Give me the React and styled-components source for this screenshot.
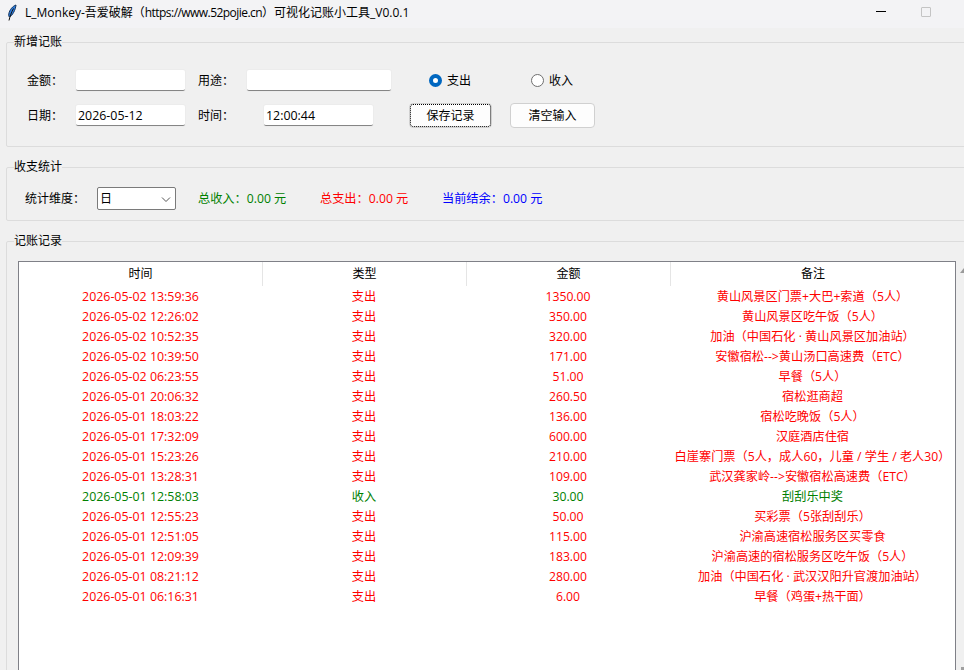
import styled, { createGlobalStyle } from 'styled-components'

const FONT = `"Open Sans", "Noto Sans CJK SC", sans-serif`

const RECORDS = [
  { time: '2026-05-02 13:59:36', type: '支出', amount: '1350.00', note: '黄山风景区门票+大巴+索道（5人）' },
  { time: '2026-05-02 12:26:02', type: '支出', amount: '350.00', note: '黄山风景区吃午饭（5人）' },
  { time: '2026-05-02 10:52:35', type: '支出', amount: '320.00', note: '加油（中国石化 · 黄山风景区加油站）' },
  { time: '2026-05-02 10:39:50', type: '支出', amount: '171.00', note: '安徽宿松-->黄山汤口高速费（ETC）' },
  { time: '2026-05-02 06:23:55', type: '支出', amount: '51.00', note: '早餐（5人）' },
  { time: '2026-05-01 20:06:32', type: '支出', amount: '260.50', note: '宿松逛商超' },
  { time: '2026-05-01 18:03:22', type: '支出', amount: '136.00', note: '宿松吃晚饭（5人）' },
  { time: '2026-05-01 17:32:09', type: '支出', amount: '600.00', note: '汉庭酒店住宿' },
  { time: '2026-05-01 15:23:26', type: '支出', amount: '210.00', note: '白崖寨门票（5人，成人60，儿童 / 学生 / 老人30）' },
  { time: '2026-05-01 13:28:31', type: '支出', amount: '109.00', note: '武汉龚家岭-->安徽宿松高速费（ETC）' },
  { time: '2026-05-01 12:58:03', type: '收入', amount: '30.00', note: '刮刮乐中奖' },
  { time: '2026-05-01 12:55:23', type: '支出', amount: '50.00', note: '买彩票（5张刮刮乐）' },
  { time: '2026-05-01 12:51:05', type: '支出', amount: '115.00', note: '沪渝高速宿松服务区买零食' },
  { time: '2026-05-01 12:09:39', type: '支出', amount: '183.00', note: '沪渝高速的宿松服务区吃午饭（5人）' },
  { time: '2026-05-01 08:21:12', type: '支出', amount: '280.00', note: '加油（中国石化 · 武汉汉阳升官渡加油站）' },
  { time: '2026-05-01 06:16:31', type: '支出', amount: '6.00', note: '早餐（鸡蛋+热干面）' },
]

const GlobalStyle = createGlobalStyle`
  html, body {
    margin: 0;
    height: 100%;
    overflow: hidden;
    background: #f0f0f0;
  }
`

const Window = styled.div`
  width: 964px;
  height: 670px;
  overflow: hidden;
  display: flex;
  flex-direction: column;
  background: #f0f0f0;
  color: #000;
  font: 12.2px/16px ${FONT};
`

const TitleBar = styled.header`
  height: 28px;
  flex: none;
  display: flex;
  align-items: center;
  padding: 0 33px 3px 6px;
  box-sizing: border-box;
  background: #f3f3f5;
`

const Title = styled.span`
  margin-left: 8px;
  flex: 1;
  font-size: 12px;
  white-space: nowrap;
`

const TitleUrl = styled.span`
  letter-spacing: -0.55px;
`

const MinimizeIcon = styled.i`
  width: 10px;
  height: 1px;
  margin: 0 35px 2px 0;
  background: #000;
`

const MaximizeIcon = styled.i`
  width: 8px;
  height: 8px;
  margin-bottom: 2px;
  border: 1px solid #c4c4c4;
  border-radius: 1px;
`

const Group = styled.fieldset`
  margin: ${(props) => props.$top}px -6px 0 6px;
  padding: 0;
  min-width: 0;
  height: ${(props) => props.$height}px;
  box-sizing: border-box;
  flex: none;
  border: 1px solid #dcdcdc;
  border-radius: 2px;
`

const Legend = styled.legend`
  margin-left: 7px;
  padding: 0;
  line-height: 14px;
  font-size: 12px;
`

const FormRows = styled.div`
  display: flex;
  flex-direction: column;
  gap: 12px;
  padding: 20px 0 0 20px;
`

const FormRow = styled.div`
  display: flex;
  align-items: center;
  height: 23px;
`

const Label = styled.label`
  width: ${(props) => props.$width}px;
  margin-left: ${(props) => props.$left || 0}px;
  flex: none;
  font-size: 12px;
`

const Entry = styled.div`
  width: ${(props) => props.$width}px;
  height: 21px;
  flex: none;
  box-sizing: border-box;
  padding-left: 2px;
  font-size: 12.4px;
  line-height: 21px;
  background: #fff;
  border-bottom: 1px solid #858585;
  border-radius: 2px;
  box-shadow: 0 0 0 1px #ececec;
`

const RadioGroup = styled.div`
  display: flex;
  width: ${(props) => props.$width}px;
  margin-left: ${(props) => props.$left || 0}px;
  align-items: center;
  gap: 5px;
  font-size: 12px;
`

const RadioDot = styled.span`
  width: 13px;
  height: 13px;
  flex: none;
  box-sizing: border-box;
  border-radius: 50%;
  background: #fff;
  border: ${(props) => (props.$checked ? '4px solid #0067c0' : '1px solid #6f6f6f')};
`

const Button = styled.button`
  width: ${(props) => props.$width}px;
  height: 25px;
  margin-left: ${(props) => props.$left}px;
  padding: 0;
  flex: none;
  font: inherit;
  font-size: 12px;
  color: #000;
  background: #fdfdfd;
  border: 1px solid #d0d0d0;
  border-radius: 4px;
  outline: ${(props) => (props.$focused ? '1px dotted #000' : 'none')};
  outline-offset: -2px;
`

const StatsRow = styled.div`
  display: flex;
  align-items: center;
  height: 23px;
  padding: 13px 0 0 18px;
`

const Combo = styled.div`
  width: 79px;
  height: 23px;
  flex: none;
  box-sizing: border-box;
  display: flex;
  align-items: center;
  justify-content: space-between;
  padding: 0 3px 0 2px;
  margin-right: 22px;
  font-size: 12px;
  background: #fff;
  border: 1px solid #7a7a7a;
  border-radius: 2px;
`

const Stat = styled.span`
  width: ${(props) => props.$width}px;
  flex: none;
  color: ${(props) => props.$color};
`

const RecordsBody = styled.div`
  display: flex;
  margin-top: 13px;
  margin-left: 11px;
  height: 409px;
`

const Table = styled.div`
  width: 938px;
  flex: none;
  box-sizing: border-box;
  background: #fff;
  border: 1px solid #7f8087;
  border-bottom: 0;
`

const Cols = styled.div`
  display: grid;
  grid-template-columns: 243px 204px 204px 1fr;
  text-align: center;
  color: ${(props) => props.$color || '#000'};
  height: ${(props) => props.$height}px;
  line-height: ${(props) => props.$height}px;
  white-space: nowrap;
`

const HeaderCell = styled.div`
  height: 24px;
  line-height: 23px;
  font-size: 12px;
  border-left: ${(props) => (props.$first ? '0' : '1px solid #e5e5e5')};
`

const TimeCell = styled.div`
  font-size: 12.4px;
`

const Scrollbar = styled.div`
  width: 8px;
  flex: none;
  display: flex;
  flex-direction: column;
  justify-content: space-between;
  align-items: flex-end;
  padding-top: 7px;
  box-sizing: border-box;
`

const ArrowUp = styled.i`
  width: 0;
  height: 0;
  border-left: 4px solid transparent;
  border-bottom: 5px solid #9a9a9a;
`

const ArrowDown = styled.i`
  width: 3px;
  height: 3px;
  background: #a0a0a0;
`

function FeatherIcon() {
  return (
    <svg width="11" height="18" viewBox="0 0 11 18" fill="none">
      <path d="M10 1C7 2 3.500 5.500 2.800 10c-.2 1.500 0 2.500.7 3C6.500 11.500 9.500 6 10 1Z" fill="#2f7fe0" stroke="#14335c" strokeWidth="1" />
      <path d="M7.500 4.500C5.500 8 4 12 3 16.500" stroke="#111" strokeWidth="1" />
    </svg>
  )
}

export default function App() {
  return (
    <Window>
      <GlobalStyle />
      <TitleBar>
        <FeatherIcon />
        <Title>L_Monkey-吾爱破解（<TitleUrl>https://www.52pojie.cn</TitleUrl>）可视化记账小工具_V0.0.1</Title>
        <MinimizeIcon />
        <MaximizeIcon />
      </TitleBar>

      <Group $top={7} $height={112}>
        <Legend>新增记账</Legend>
        <FormRows>
          <FormRow>
            <Label $width={49}>金额：</Label>
            <Entry $width={109} />
            <Label $width={49} $left={13}>用途：</Label>
            <Entry $width={144} />
            <RadioGroup $width={102} $left={38}>
              <RadioDot $checked />
              <span>支出</span>
            </RadioGroup>
            <RadioGroup $width={60}>
              <RadioDot />
              <span>收入</span>
            </RadioGroup>
          </FormRow>
          <FormRow>
            <Label $width={49}>日期：</Label>
            <Entry $width={109}>2026-05-12</Entry>
            <Label $width={66} $left={13}>时间：</Label>
            <Entry $width={109}>12:00:44</Entry>
            <Button $width={83} $left={36} $focused>保存记录</Button>
            <Button $width={85} $left={18}>清空输入</Button>
          </FormRow>
        </FormRows>
      </Group>

      <Group $top={13} $height={61}>
        <Legend>收支统计</Legend>
        <StatsRow>
          <Label $width={72}>统计维度：</Label>
          <Combo>
            <span>日</span>
            <svg width="12" height="12" viewBox="0 0 12 12" fill="none">
              <path d="M2 4.500l4 4 4-4" stroke="#555" strokeWidth="1" />
            </svg>
          </Combo>
          <Stat $width={122} $color="#008000">总收入：0.00 元</Stat>
          <Stat $width={122} $color="#ff0000">总支出：0.00 元</Stat>
          <Stat $width={140} $color="#0000ff">当前结余：0.00 元</Stat>
        </StatsRow>
      </Group>

      <Group $top={13} $height={440}>
        <Legend>记账记录</Legend>
        <RecordsBody>
          <Table>
            <Cols $height={25}>
              <HeaderCell $first>时间</HeaderCell>
              <HeaderCell>类型</HeaderCell>
              <HeaderCell>金额</HeaderCell>
              <HeaderCell>备注</HeaderCell>
            </Cols>
            {RECORDS.map((record) => (
              <Cols key={record.time} $height={20} $color={record.type === '收入' ? '#008000' : '#ff0000'}>
                <TimeCell>{record.time}</TimeCell>
                <div>{record.type}</div>
                <div>{record.amount}</div>
                <div>{record.note}</div>
              </Cols>
            ))}
          </Table>
          <Scrollbar>
            <ArrowUp />
            <ArrowDown />
          </Scrollbar>
        </RecordsBody>
      </Group>
    </Window>
  )
}
